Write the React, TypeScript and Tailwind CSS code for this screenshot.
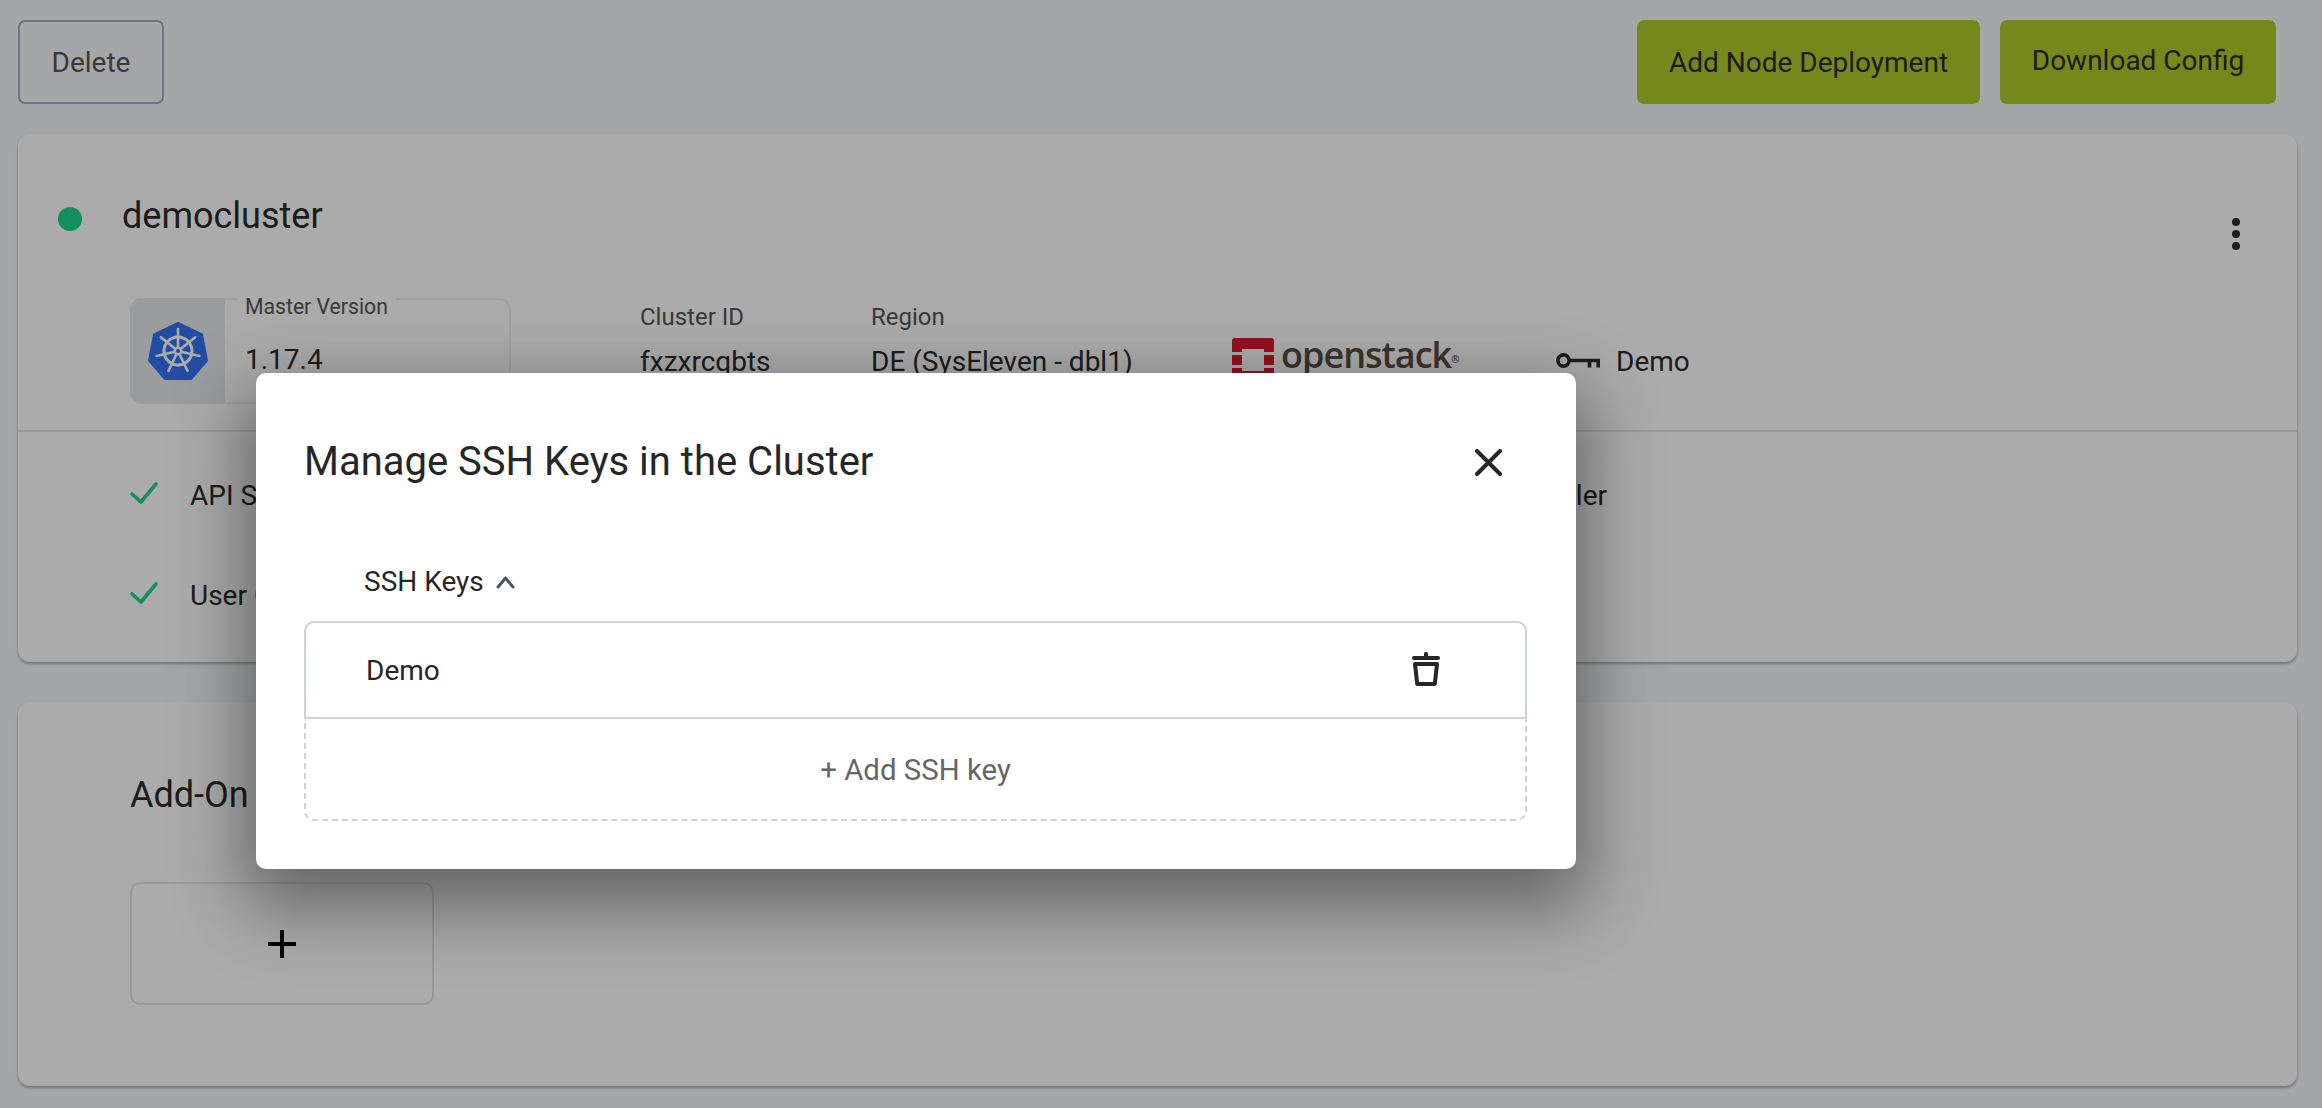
import React from "react";

function KubeLogo() {
  const spokes = [0, 1, 2, 3, 4, 5, 6];
  return (
    <svg width="60" height="60" viewBox="0 0 60 60" fill="none">
      <path d="M30 2 L54 13.5 L59 39.5 L43 58 L17 58 L1 39.5 L6 13.5 Z" fill="#3474f4" stroke="#3474f4" strokeWidth="2" strokeLinejoin="round" />
      <circle cx="30" cy="30" r="14" stroke="#ffffff" strokeWidth="3" />
      {spokes.map((i) => (
        <line key={i} x1="30" y1="30" x2="30" y2="8" stroke="#ffffff" strokeWidth="2.6" strokeLinecap="round" transform={`rotate(${(360 / 7) * i} 30 30)`} />
      ))}
      <circle cx="30" cy="30" r="4.5" fill="#ffffff" />
      <circle cx="30" cy="30" r="2" fill="#3474f4" />
    </svg>
  );
}

function OpenstackMark() {
  return (
    <svg width="42" height="44" viewBox="0 0 42 44">
      <path d="M3 0 H39 A3 3 0 0 1 42 3 V14 H32 V11 H10 V14 H0 V3 A3 3 0 0 1 3 0 Z" fill="#da1a32" />
      <rect x="0" y="17" width="10" height="10" fill="#da1a32" />
      <rect x="32" y="17" width="10" height="10" fill="#da1a32" />
      <path d="M0 30 H10 V33 H32 V30 H42 V41 A3 3 0 0 1 39 44 H3 A3 3 0 0 1 0 41 Z" fill="#da1a32" />
    </svg>
  );
}

function KeyIcon() {
  return (
    <svg width="44" height="16" viewBox="0 0 44 16" fill="none" stroke="#2b2b2b" strokeWidth="3.6">
      <circle cx="7.5" cy="7.5" r="5.6" />
      <path d="M13 7.5 H44 M33.5 7.5 V14.5 M42.2 7.5 V14.5" />
    </svg>
  );
}

function Check() {
  return (
    <svg width="28" height="22" viewBox="0 0 28 22" fill="none" stroke="#1cd88a" strokeWidth="3.6" strokeLinecap="round" strokeLinejoin="round">
      <path d="M2 12 L11 20 L26 2" />
    </svg>
  );
}

function Status({ label }: { label: string }) {
  return (
    <div className="flex h-[40px] items-center">
      <div className="-mt-[6px] w-[60px]">
        <Check />
      </div>
      <span className="text-[28px] leading-[40px] text-[#2b2b2b]">{label}</span>
    </div>
  );
}

export default function App() {
  return (
    <div className="relative h-[1108px] w-full overflow-hidden bg-[#f7f8fa] font-['Roboto',sans-serif]">
      <div className="flex justify-between pl-[18px] pr-[46px] pt-[20px]">
        <button className="h-[84px] w-[146px] rounded-[7px] border-2 border-[#a6aeb9] pt-[2px] text-[28px] text-[#555]">Delete</button>
        <div className="flex gap-[20px]">
          <button className="h-[84px] w-[343px] rounded-[7px] bg-[#b0cb2b] pt-[2px] text-[28px] text-[#2b2b2b]">Add Node Deployment</button>
          <button className="h-[84px] w-[276px] rounded-[7px] bg-[#b0cb2b] pb-[2px] text-[28px] text-[#2b2b2b]">Download Config</button>
        </div>
      </div>

      <section className="ml-[18px] mr-[25px] mt-[30px] rounded-[12px] bg-white shadow-[0_2px_3px_rgba(0,0,0,0.3)]">
        <div className="flex justify-between pl-[40px] pr-[57px] pt-[60px]">
          <div className="flex items-start gap-[40px]">
            <div className="mt-[13px] h-[24px] w-[24px] rounded-full bg-[#1bd588]" />
            <h2 className="pt-[1px] text-[36px] leading-[42px] text-[#2b2b2b]">democluster</h2>
          </div>
          <div className="mt-[24px] flex flex-col gap-[4px]">
            <span className="h-[8px] w-[8px] rounded-full bg-[#2b2b2b]" />
            <span className="h-[8px] w-[8px] rounded-full bg-[#2b2b2b]" />
            <span className="h-[8px] w-[8px] rounded-full bg-[#2b2b2b]" />
          </div>
        </div>

        <div className="mt-[48px] flex h-[106px] pl-[112px]">
          <div className="relative mr-[129px] flex h-[106px] w-[381px] rounded-[12px] border-2 border-[#eeeeee]">
            <div className="-m-[2px] flex h-[106px] w-[95px] items-center justify-center rounded-l-[12px] bg-[#e7e9ec]">
              <KubeLogo />
            </div>
            <span className="absolute -top-[7px] left-[105px] bg-white px-[8px] text-[21.2px] leading-[28px] text-[#555]">Master Version</span>
            <span className="ml-[22px] mt-[42px] text-[28px] leading-[36px] text-[#2b2b2b]">1.17.4</span>
          </div>
          <div className="w-[231px] pt-[4px]">
            <div className="text-[24px] leading-[30px] text-[#555]">Cluster ID</div>
            <div className="mt-[12px] text-[28px] leading-[36px] text-[#2b2b2b]">fxzxrcqbts</div>
          </div>
          <div className="w-[361px] pt-[4px]">
            <div className="text-[24px] leading-[30px] text-[#555]">Region</div>
            <div className="mt-[12px] text-[28px] leading-[36px] text-[#2b2b2b]">DE (SysEleven - dbl1)</div>
          </div>
          <div className="flex h-[84px] w-[324px] items-start gap-[7px] pt-[40px]">
            <OpenstackMark />
            <span className="-mt-[8px] font-['Open_Sans',sans-serif] text-[36px] font-semibold leading-[50px] tracking-[-1px] text-[#574c46]">
              openstack<sup className="text-[10px]">®</sup>
            </span>
          </div>
          <div className="flex h-[84px] items-center gap-[16px] pt-[42px]">
            <KeyIcon />
            <span className="pt-[2px] text-[28px] leading-[36px] text-[#2b2b2b]">Demo</span>
          </div>
        </div>

        <div className="mt-[26px] border-t-2 border-[#e6e6e6]" />

        <div className="flex flex-col gap-[60px] pb-[46px] pl-[112px] pt-[44px]">
          <div className="flex w-[1477px] justify-between">
            <Status label="API Server" />
            <span className="text-[28px] leading-[40px] text-[#2b2b2b]">Machine Controller</span>
          </div>
          <Status label="User Cluster Controller" />
        </div>
      </section>

      <section className="ml-[18px] mr-[25px] mt-[40px] rounded-[12px] bg-white pb-[81px] pl-[112px] pt-[72px] shadow-[0_2px_3px_rgba(0,0,0,0.3)]">
        <h2 className="text-[36px] leading-[42px] text-[#2b2b2b]">Add-On</h2>
        <div className="mt-[66px] flex h-[123px] w-[304px] items-center justify-center rounded-[10px] border-2 border-[#e4e4e4]">
          <svg width="30" height="30" viewBox="0 0 30 30" stroke="#000" strokeWidth="4">
            <path d="M15 1 V29 M1 15 H29" />
          </svg>
        </div>
      </section>

      <div className="absolute inset-0 bg-black/[0.33]" />

      <div className="absolute left-[256px] top-[373px] h-[496px] w-[1320px] rounded-[10px] bg-white pl-[48px] pr-[49px] pt-[66px] shadow-[0_28px_70px_12px_rgba(0,0,0,0.4)]">
        <div className="flex items-center justify-between pr-[25px]">
          <h1 className="text-[40px] leading-[46px] text-[#262626]">Manage SSH Keys in the Cluster</h1>
          <svg width="27" height="27" viewBox="0 0 27 27" stroke="#262626" strokeWidth="4" strokeLinecap="round">
            <path d="M2 2 L25 25 M25 2 L2 25" />
          </svg>
        </div>
        <div className="ml-[60px] mt-[79px] flex h-[36px] items-center gap-[12px] text-[28px] leading-[36px] text-[#262626]">
          SSH Keys
          <svg width="19" height="13" viewBox="0 0 19 13" fill="none" stroke="#4a5568" strokeWidth="3" strokeLinecap="round" strokeLinejoin="round">
            <path d="M2 11 L9.5 2 L17 11" />
          </svg>
        </div>
        <div className="mt-[21px] flex h-[98px] items-center justify-between rounded-t-[10px] border-2 border-[#cbd2dc] pl-[60px] pr-[85px]">
          <span className="pt-[2px] text-[28px] leading-[36px] text-[#262626]">Demo</span>
          <svg width="28" height="34" viewBox="0 0 28 34" fill="none" className="-mt-[3px]">
            <rect x="0" y="4" width="28" height="4" rx="2" fill="#262626" />
            <rect x="12" y="0" width="4" height="5" rx="1.5" fill="#262626" />
            <path d="M3 12 H25 L22.8 32 H5.2 Z" stroke="#262626" strokeWidth="4" strokeLinejoin="round" />
          </svg>
        </div>
        <div className="flex h-[102px] items-center justify-center rounded-b-[10px] border-x-2 border-b-2 border-dashed border-[#cbd2dc] pt-[2px] text-[29.4px] leading-[36px] text-[#666]">
          + Add SSH key
        </div>
      </div>
    </div>
  );
}
